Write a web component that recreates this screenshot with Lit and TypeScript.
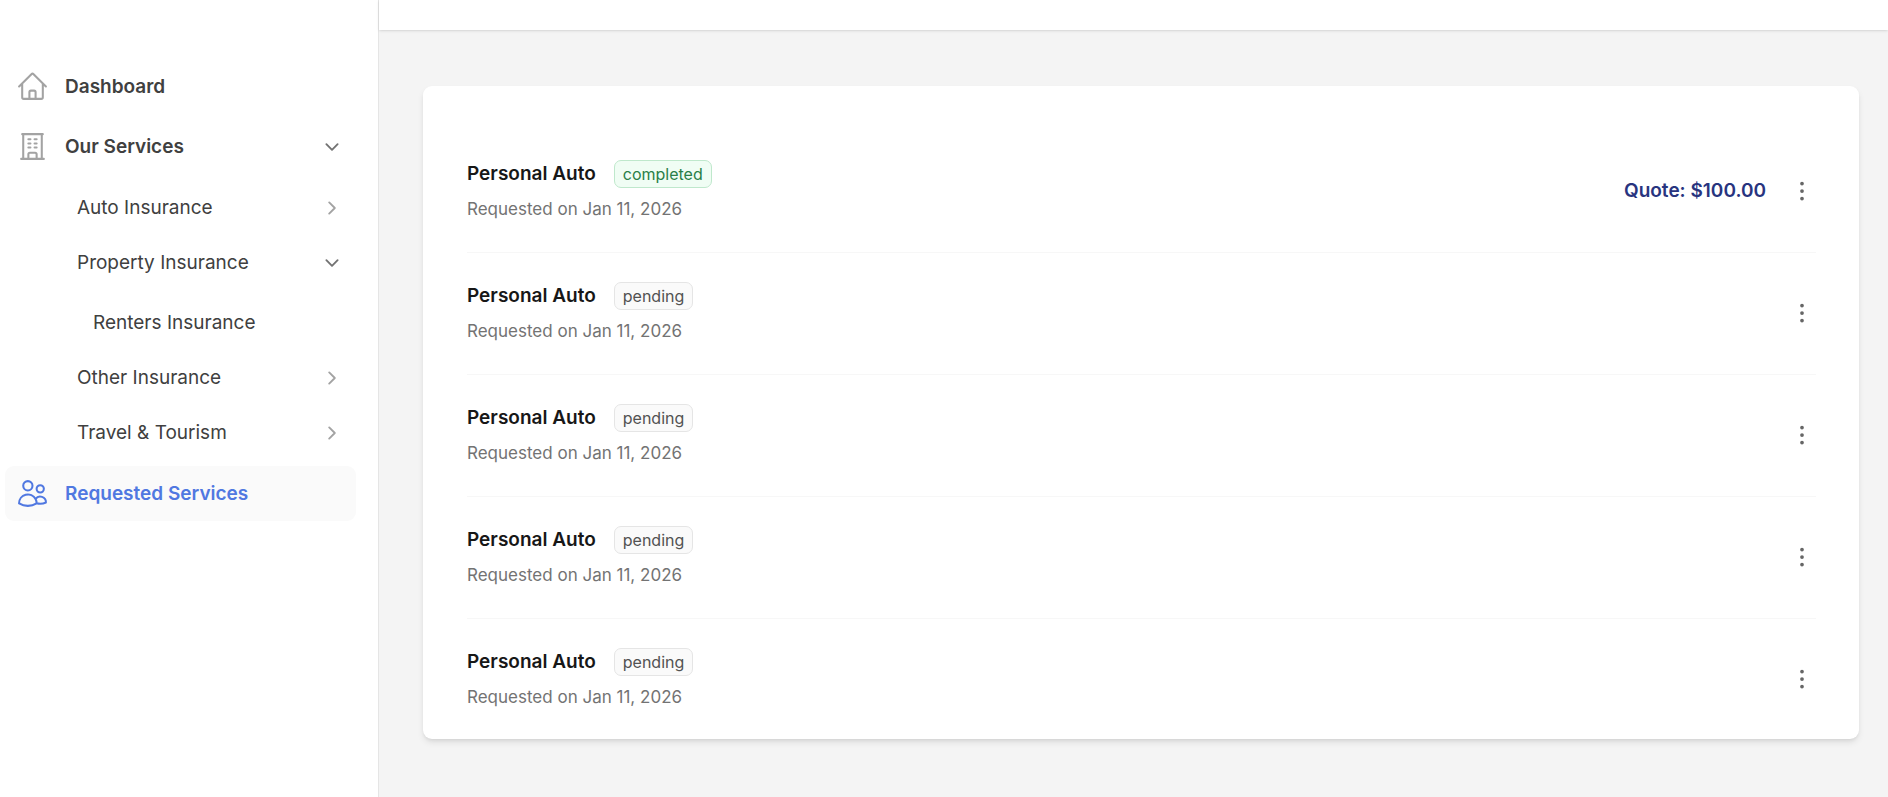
import { LitElement, html, css, svg, nothing } from "lit";
import { customElement, state } from "lit/decorators.js";
import { classMap } from "lit/directives/class-map.js";

interface NavItem {
  label: string;
  level: number;
  icon?: "home" | "building" | "users";
  arrow?: "right" | "down";
  active?: boolean;
}

interface ServiceRequest {
  name: string;
  status: "completed" | "pending";
  date: string;
  quote?: string;
}

const ICONS = {
  home: "m2.25 12 8.954-8.955c.44-.439 1.152-.439 1.591 0L21.75 12M4.5 9.75v10.125c0 .621.504 1.125 1.125 1.125H9.75v-4.875c0-.621.504-1.125 1.125-1.125h2.25c.621 0 1.125.504 1.125 1.125V21h4.125c.621 0 1.125-.504 1.125-1.125V9.75M8.25 21h8.25",
  building:
    "M3.75 21h16.5M4.5 3h15M5.25 3v18m13.5-18v18M9 6.75h1.5m-1.5 3h1.5m-1.5 3h1.5m3-6H15m-1.5 3H15m-1.5 3H15M9 21v-3.375c0-.621.504-1.125 1.125-1.125h3.75c.621 0 1.125.504 1.125 1.125V21",
  users:
    "M15 19.128a9.38 9.38 0 0 0 2.625.372 9.337 9.337 0 0 0 4.121-.952 4.125 4.125 0 0 0-7.533-2.493M15 19.128v-.003c0-1.113-.285-2.16-.786-3.07M15 19.128v.106A12.318 12.318 0 0 1 8.624 21c-2.331 0-4.512-.645-6.374-1.766l-.001-.109a6.375 6.375 0 0 1 11.964-3.07M12 6.375a3.375 3.375 0 1 1-6.75 0 3.375 3.375 0 0 1 6.75 0Zm8.25 2.25a2.625 2.625 0 1 1-5.25 0 2.625 2.625 0 0 1 5.25 0Z",
  right: "m8.25 4.5 7.5 7.5-7.5 7.5",
  down: "m19.5 8.25-7.5 7.5-7.5-7.5",
  dots: "M12 6.75a.75.75 0 1 1 0-1.5.75.75 0 0 1 0 1.5ZM12 12.75a.75.75 0 1 1 0-1.5.75.75 0 0 1 0 1.5ZM12 18.75a.75.75 0 1 1 0-1.5.75.75 0 0 1 0 1.5Z",
};

const icon = (name: keyof typeof ICONS, cls: string) => html`
  <svg class=${cls} viewBox="0 0 24 24" aria-hidden="true">
    ${svg`<path d=${ICONS[name]}></path>`}
  </svg>
`;

@customElement("side-nav")
export class SideNav extends LitElement {
  @state() private items: NavItem[] = [
    { label: "Dashboard", level: 0, icon: "home" },
    { label: "Our Services", level: 0, icon: "building", arrow: "down" },
    { label: "Auto Insurance", level: 1, arrow: "right" },
    { label: "Property Insurance", level: 1, arrow: "down" },
    { label: "Renters Insurance", level: 2 },
    { label: "Other Insurance", level: 1, arrow: "right" },
    { label: "Travel & Tourism", level: 1, arrow: "right" },
    { label: "Requested Services", level: 0, icon: "users", active: true },
  ];

  static styles = css`
    :host {
      display: block;
      box-sizing: border-box;
      flex: 0 0 379px;
      border-right: 1px solid #e5e5e5;
      background: #ffffff;
      padding: 54px 22px 0 5px;
    }
    .list {
      list-style: none;
      margin: 0;
      padding: 0;
    }
    .cell.top,
    .cell.deep {
      padding-top: 5px;
    }
    .cell.top + .cell.mid,
    .cell.mid + .cell.top {
      padding-top: 6px;
    }
    .item {
      display: flex;
      align-items: center;
      box-sizing: border-box;
      width: 100%;
      height: 55px;
      margin: 0;
      padding: 0 15px 0 11px;
      border: 0;
      border-radius: 9px;
      background: none;
      color: #404040;
      font: 400 19px/28px Inter, sans-serif;
      text-align: left;
      text-decoration: none;
      cursor: pointer;
    }
    .top .item {
      font-weight: 600;
    }
    .mid .item {
      padding-left: 72px;
    }
    .deep .item {
      padding-left: 88px;
    }
    .item.active {
      background: #fafafa;
      color: #5078e1;
    }
    .label {
      flex: 1;
    }
    .icon {
      width: 33px;
      height: 33px;
      margin-right: 16px;
      fill: none;
      stroke: #a3a3a3;
      stroke-width: 1.5;
      stroke-linecap: round;
      stroke-linejoin: round;
    }
    .active .icon {
      stroke: #5078e1;
    }
    .arrow {
      width: 18px;
      height: 18px;
      fill: none;
      stroke: #a3a3a3;
      stroke-width: 2.5;
      stroke-linecap: round;
      stroke-linejoin: round;
    }
    .arrow.down {
      stroke: #737373;
    }
  `;

  private renderItem(item: NavItem) {
    const level = ["top", "mid", "deep"][item.level];
    const content = html`
      ${item.icon ? icon(item.icon, "icon") : nothing}
      <span class="label">${item.label}</span>
      ${item.arrow ? icon(item.arrow, `arrow ${item.arrow}`) : nothing}
    `;
    return html`
      <li class="cell ${level}">
        ${item.arrow
          ? html`<button
              type="button"
              class="item"
              aria-expanded=${item.arrow === "down" ? "true" : "false"}
            >
              ${content}
            </button>`
          : html`<a
              href="#"
              class=${classMap({ item: true, active: !!item.active })}
              aria-current=${item.active ? "page" : nothing}
              >${content}</a
            >`}
      </li>
    `;
  }

  render() {
    return html`
      <nav aria-label="Main">
        <ul class="list">
          ${this.items.map((item) => this.renderItem(item))}
        </ul>
      </nav>
    `;
  }
}

@customElement("request-list")
export class RequestList extends LitElement {
  @state() private requests: ServiceRequest[] = [
    {
      name: "Personal Auto",
      status: "completed",
      date: "Jan 11, 2026",
      quote: "$100.00",
    },
    { name: "Personal Auto", status: "pending", date: "Jan 11, 2026" },
    { name: "Personal Auto", status: "pending", date: "Jan 11, 2026" },
    { name: "Personal Auto", status: "pending", date: "Jan 11, 2026" },
    { name: "Personal Auto", status: "pending", date: "Jan 11, 2026" },
  ];

  static styles = css`
    :host {
      display: block;
      border-radius: 9px;
      background: #ffffff;
      box-shadow: 0 4px 7px -1px rgba(0, 0, 0, 0.1),
        0 2px 4px -2px rgba(0, 0, 0, 0.1);
      padding: 45px 43px 0 44px;
      font-family: Inter, sans-serif;
    }
    .list {
      list-style: none;
      margin: 0;
      padding: 0;
    }
    .row {
      display: flex;
      align-items: center;
      gap: 22px;
      padding: 28px 0 29px;
      border-bottom: 1px solid #f7f7f7;
    }
    .row:last-child {
      border-bottom: 0;
      padding-bottom: 28px;
    }
    .info {
      flex: 1;
      display: grid;
      gap: 6px;
    }
    .head {
      display: flex;
      align-items: center;
      gap: 18px;
    }
    .name {
      margin: 0;
      color: #171717;
      font-size: 19px;
      font-weight: 600;
      line-height: 30px;
    }
    .badge {
      border: 1px solid #e5e5e5;
      border-radius: 7px;
      background: #fafafa;
      color: #525252;
      padding: 0 8px;
      font-size: 16px;
      line-height: 26px;
    }
    .badge.completed {
      border-color: #bfe8cc;
      background: #f0fdf4;
      color: #2a7f48;
    }
    .date {
      margin: 0;
      color: #737373;
      font-size: 17px;
      line-height: 28px;
    }
    .quote {
      color: #28347f;
      font-size: 19px;
      font-weight: 600;
      line-height: 28px;
    }
    .more {
      display: flex;
      justify-content: center;
      width: 28px;
      margin: 0;
      border: 0;
      padding: 0;
      background: none;
      cursor: pointer;
    }
    .dots {
      flex: none;
      width: 30px;
      height: 30px;
      fill: none;
      stroke: #666666;
      stroke-width: 1.5;
    }
  `;

  render() {
    return html`
      <ul class="list">
        ${this.requests.map(
          (r) => html`
            <li class="row">
              <div class="info">
                <div class="head">
                  <h2 class="name">${r.name}</h2>
                  <span class="badge ${r.status}">${r.status}</span>
                </div>
                <p class="date">Requested on ${r.date}</p>
              </div>
              ${r.quote
                ? html`<span class="quote">Quote: ${r.quote}</span>`
                : nothing}
              <button type="button" class="more" aria-label="Open options">
                ${icon("dots", "dots")}
              </button>
            </li>
          `
        )}
      </ul>
    `;
  }
}

@customElement("app-root")
export class AppRoot extends LitElement {
  static styles = css`
    :host {
      display: flex;
      min-height: 100vh;
      background: #f4f4f4;
    }
    .page {
      flex: 1;
      min-width: 0;
    }
    .bar {
      height: 30px;
      background: #ffffff;
      box-shadow: 0 1px 3px rgba(0, 0, 0, 0.1), 0 1px 2px -1px rgba(0, 0, 0, 0.1);
    }
    .main {
      padding: 56px 29px 44px 44px;
    }
  `;

  render() {
    return html`
      <side-nav></side-nav>
      <div class="page">
        <header class="bar"></header>
        <main class="main"><request-list></request-list></main>
      </div>
    `;
  }
}
